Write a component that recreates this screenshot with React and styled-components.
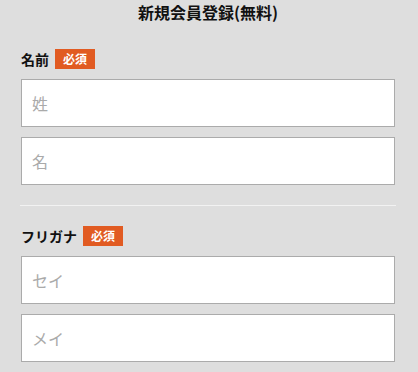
import React from "react";
import styled, { createGlobalStyle } from "styled-components";

const Global = createGlobalStyle`
  html, body {
    margin: 0;
    padding: 0;
    background: #dedede;
  }
  body {
    font-family: "Noto Sans CJK JP", "Noto Sans", sans-serif;
    color: #111;
  }
`;

const Page = styled.div`
  padding: 0 23px 0 21px;
`;

const Title = styled.h1`
  margin: 0;
  font-size: 16px;
  font-weight: 700;
  line-height: 24px;
  text-align: center;
  color: #111;
`;

const Section = styled.section`
  display: flex;
  flex-direction: column;
  margin-top: ${(p) => p.$top}px;
`;

const LabelRow = styled.div`
  display: flex;
  align-items: center;
  height: 20px;
  gap: 6px;
`;

const Label = styled.label`
  font-size: 14px;
  font-weight: 700;
  line-height: 20px;
  color: #111;
`;

const Badge = styled.span`
  display: inline-flex;
  align-items: center;
  justify-content: center;
  height: 20px;
  padding: 0 8px;
  background: #e15b22;
  color: #fff;
  font-size: 12px;
  font-weight: 700;
  line-height: 20px;
`;

const Fields = styled.div`
  display: flex;
  flex-direction: column;
  gap: 10px;
  margin-top: 10px;
`;

const Input = styled.input`
  box-sizing: border-box;
  width: 100%;
  height: 48px;
  margin: 0;
  padding: 0 10px;
  border: 1px solid #ababab;
  border-radius: 0;
  background: #fff;
  font-family: "Noto Sans CJK JP", "Noto Sans", sans-serif;
  font-size: 16px;
  color: #111;
  outline: none;
  &::placeholder {
    color: #aaaaaa;
  }
`;

const Divider = styled.hr`
  margin: 20px -1px 0;
  height: 1px;
  border: 0;
  background: #f2f2f2;
`;

export default function App() {
  return (
    <>
      <Global />
      <Page>
        <Title>新規会員登録(無料)</Title>
        <Section $top={25}>
          <LabelRow>
            <Label>名前</Label>
            <Badge>必須</Badge>
          </LabelRow>
          <Fields>
            <Input placeholder="姓" />
            <Input placeholder="名" />
          </Fields>
        </Section>
        <Divider />
        <Section $top={20}>
          <LabelRow>
            <Label>フリガナ</Label>
            <Badge>必須</Badge>
          </LabelRow>
          <Fields>
            <Input placeholder="セイ" />
            <Input placeholder="メイ" />
          </Fields>
        </Section>
      </Page>
    </>
  );
}
